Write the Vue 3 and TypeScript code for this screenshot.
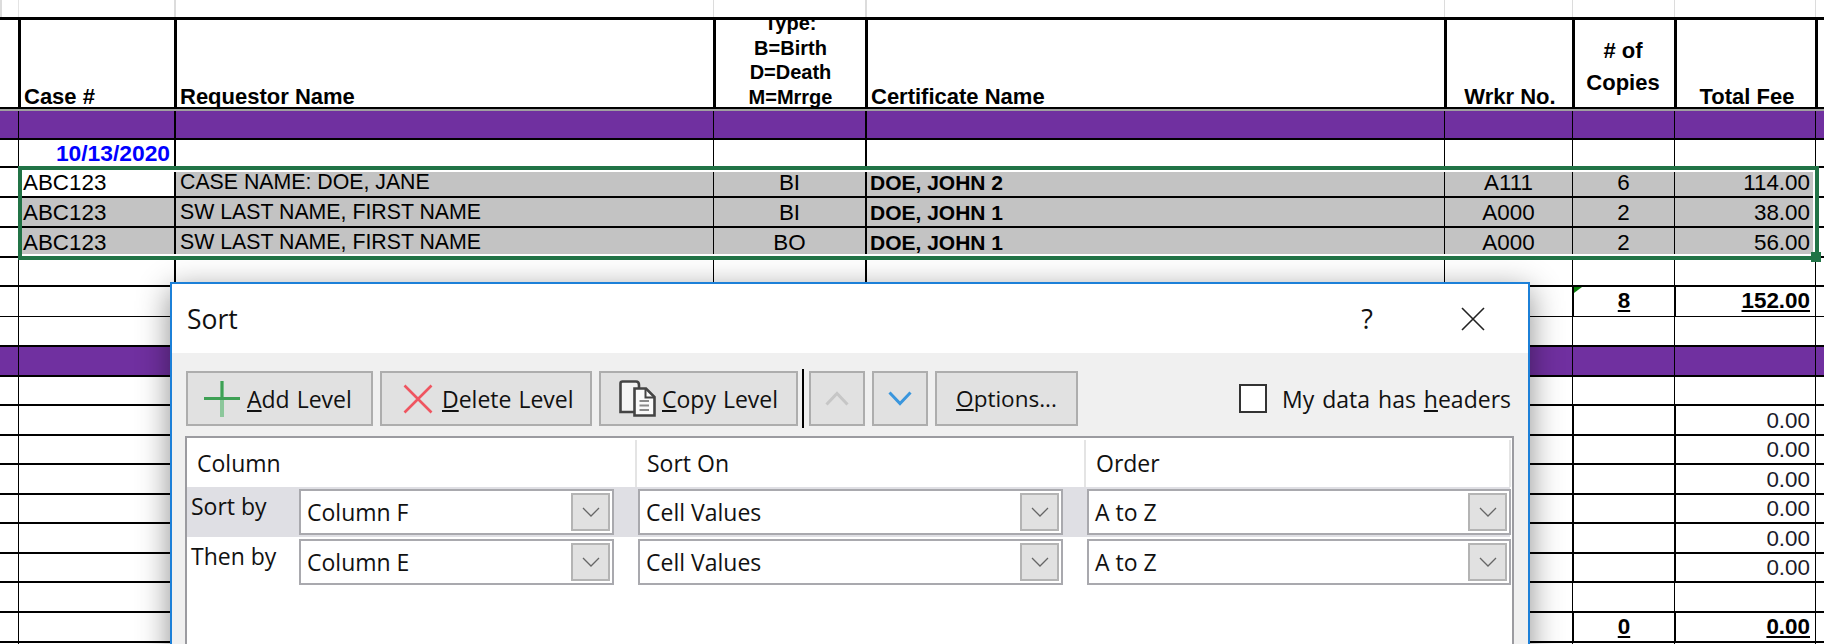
<script setup lang="ts">
interface Row { h: number; cls: string; cells: string[] }
const blank = (h: number, cls = ''): Row => ({ h, cls: 'blank ' + cls, cells: Array(9).fill('') })
const fee = (h: number): Row => ({ h, cls: 'fee', cells: ['', '', '', '', '', '', '', '0.00', ''] })
const rows: Row[] = [
  blank(17, 'top'),
  { h: 92, cls: 'head', cells: ['', 'Case #', 'Requestor Name', 'Type:\nB=Birth\nD=Death\nM=Mrrge', 'Certificate Name', 'Wrkr No.', '# of\nCopies', 'Total Fee', ''] },
  blank(31, 'purple first-purple'),
  { h: 28, cls: 'date', cells: ['', '10/13/2020', '', '', '', '', '', '', ''] },
  { h: 30, cls: 'data first', cells: ['', 'ABC123', 'CASE NAME: DOE, JANE', 'BI', 'DOE, JOHN 2', 'A111', '6', '114.00', ''] },
  { h: 30, cls: 'data', cells: ['', 'ABC123', 'SW LAST NAME, FIRST NAME', 'BI', 'DOE, JOHN 1', 'A000', '2', '38.00', ''] },
  { h: 30, cls: 'data', cells: ['', 'ABC123', 'SW LAST NAME, FIRST NAME', 'BO', 'DOE, JOHN 1', 'A000', '2', '56.00', ''] },
  blank(29),
  { h: 30, cls: 'total thin-line corner', cells: ['', '', '', '', '', '', '8', '152.00', ''] },
  blank(30),
  blank(30, 'purple'),
  blank(29),
  fee(30), fee(29), fee(30), fee(29), fee(30), fee(29),
  blank(30),
  { h: 30, cls: 'total', cells: ['', '', '', '', '', '', '0', '0.00', ''] },
  blank(4),
]

const levels = [
  { label: 'Sort by', col: 'Column F', cls: 'active' },
  { label: 'Then by', col: 'Column E', cls: '' },
]
</script>

<template>
  <div class="page">
    <div class="sheet">
      <div v-for="(r, i) in rows" :key="i" class="row" :class="r.cls" :style="{ height: r.h + 'px' }">
        <div v-for="(t, j) in r.cells" :key="j" class="c" :class="'c' + j">{{ t }}</div>
      </div>
    </div>

    <div class="selection"><span class="handle"></span></div>

    <section class="dialog">
      <header class="title">
        <span class="title-text">Sort</span>
        <span class="help">?</span>
        <svg class="close" width="24" height="24" viewBox="0 0 24 24"><path d="M1 1 23 23M23 1 1 23" stroke="#222" stroke-width="1.600" fill="none" /></svg>
      </header>
      <div class="body">
        <div class="toolbar">
          <button class="btn b-add">
            <svg class="ico-plus" width="36" height="36" viewBox="0 0 36 36"><path d="M18 0V36" stroke="#8cc79b" stroke-width="4" /><path d="M0 17.500H36" stroke="#3ea055" stroke-width="3" /><path d="M18 0V17" stroke="#3ea055" stroke-width="2.500" /></svg>
            <span><u>A</u>dd Level</span>
          </button>
          <button class="btn b-del">
            <svg class="ico-x" width="30" height="30" viewBox="0 0 30 30"><path d="M1.500 1.500 28.500 28.500M28.500 1.500 1.500 28.500" stroke="#ef5560" stroke-width="2.600" fill="none" /></svg>
            <span><u>D</u>elete Level</span>
          </button>
          <button class="btn b-copy">
            <svg class="ico-copy" width="37" height="37" viewBox="0 0 37 37">
              <path d="M1.500 3.500Q1.500 1.500 3.500 1.500H17Q20 1.500 20 5V32H1.500Z" fill="#f4f4f4" stroke="#444" stroke-width="2.600" />
              <path d="M15.500 8.500H27L35.500 17V35.500H15.500Z" fill="#fafafa" stroke="#444" stroke-width="2.600" />
              <path d="M26.500 8.500V17.500H35" fill="none" stroke="#444" stroke-width="2" />
              <path d="M20.500 21H30M20.500 25.500H30M20.500 30H30" stroke="#8a8a8a" stroke-width="2" />
            </svg>
            <span><u>C</u>opy Level</span>
          </button>
          <i class="sep"></i>
          <button class="btn b-arrow">
            <svg width="24" height="15" viewBox="0 0 24 15"><path d="M1.500 13.500 12 2.500 22.500 13.500" fill="none" stroke="#c6c6c6" stroke-width="3" /></svg>
          </button>
          <button class="btn b-arrow">
            <svg width="24" height="15" viewBox="0 0 24 15"><path d="M1.500 1.500 12 12.500 22.500 1.500" fill="none" stroke="#3a96dd" stroke-width="3" /></svg>
          </button>
          <button class="btn b-opt"><span><u>O</u>ptions...</span></button>
          <label class="check"><i class="box"></i><span>My data has <u>h</u>eaders</span></label>
        </div>

        <div class="panel">
          <div class="phead">
            <div class="ph">Column</div>
            <div class="ph">Sort On</div>
            <div class="ph">Order</div>
          </div>
          <div v-for="l in levels" :key="l.label" class="level" :class="l.cls">
            <div class="lab">{{ l.label }}</div>
            <div class="combo k1"><span>{{ l.col }}</span><i class="drop"><svg width="18" height="10" viewBox="0 0 18 10"><path d="M1 1 9 9 17 1" fill="none" stroke="#666" stroke-width="1.300" /></svg></i></div>
            <div class="combo k2"><span>Cell Values</span><i class="drop"><svg width="18" height="10" viewBox="0 0 18 10"><path d="M1 1 9 9 17 1" fill="none" stroke="#666" stroke-width="1.300" /></svg></i></div>
            <div class="combo k3"><span>A to Z</span><i class="drop"><svg width="18" height="10" viewBox="0 0 18 10"><path d="M1 1 9 9 17 1" fill="none" stroke="#666" stroke-width="1.300" /></svg></i></div>
          </div>
        </div>
      </div>
    </section>
  </div>
</template>

<style scoped>
.page { position: relative; width: 1824px; height: 644px; overflow: hidden; background: #fff; font-family: "Liberation Sans", Arial, sans-serif; color: #000; }
.sheet { display: flex; flex-direction: column; }
.row { display: grid; grid-template-columns: 18px 156px 539px 152px 579px 128px 102px 141px 9px; box-sizing: border-box; border-bottom: 2px solid #000; font-size: 22.400px; }
.c { box-sizing: border-box; border-left: 2px solid #000; display: flex; align-items: center; overflow: hidden; white-space: pre-line; position: relative; }
.c0 { border-left: 0; }
.c1 { padding-left: 4px; }
.c2 { padding-left: 4px; font-size: 21.300px; }
.c3, .c5, .c6 { justify-content: center; text-align: center; }
.c4 { padding-left: 3px; font-weight: 700; font-size: 21px; }
.c7 { justify-content: flex-end; padding-right: 5px; }
.row:not(.head):not(.fee):not(.total) .c3,
.row:not(.head):not(.fee):not(.total) .c5,
.row:not(.head):not(.fee):not(.total) .c6,
.row:not(.head):not(.fee):not(.total) .c7,
.row:not(.head) .c1,
.row:not(.head) .c8 { border-left-width: 1px; }

.top { border-bottom: 0; }
.top .c { border-left: 2px solid #dcdcdc; }
.top .c1 { border-left-color: #e4e4e4; }
.head { border-top: 3px solid #000; font-weight: 700; overflow: hidden; }
.head .c { align-items: flex-end; border-left-width: 3px; font-size: 22px; line-height: 24px; margin-bottom: -2px; }
.head .c0 { border-left: 0; }
.head .c1 { padding-left: 3px; }
.head .c2 { padding-left: 3px; }
.head .c3 { font-size: 20px; line-height: 24.500px; }
.head .c6 { line-height: 32px; padding: 0 3px 10px 0; }
.head .c7 { justify-content: center; padding: 0 0 0 2px; }
.head .c5 { padding-left: 1px; }
.purple { background: #7030a0; }
.first-purple { border-top: 2px solid #a0a0a0; }
.date .c1 { justify-content: flex-end; padding: 0 4px 0 0; color: #0000ff; font-weight: 700; font-size: 22.800px; }
.data .c1, .data .c2, .data .c3, .data .c4, .data .c5, .data .c6, .data .c7 { background: #c3c3c3; padding-top: 1px; }
.data.first .c1 { background: #fff; }
.data .c2 { align-items: flex-start; line-height: 28px; padding-top: 0; }
.fee .c7 { padding-top: 1px; color: #1a1a2a; }
.thin-line { border-bottom-width: 1px; }
.total { font-weight: 700; }
.total .c6, .total .c7 { text-decoration: underline; text-decoration-thickness: 2px; text-underline-offset: 2px; padding-bottom: 1px; }
.corner .c6::before { content: ""; position: absolute; left: 0; top: 0; width: 0; height: 0; border-top: 6px solid #0a7d0a; border-right: 8px solid transparent; }

.selection { position: absolute; left: 18px; top: 166px; width: 1801px; height: 94px; box-sizing: border-box; border: 4px solid #217346; }
.selection::after { content: ""; position: absolute; inset: 0; border: 2px solid #fff; border-left: 0; }
.handle { position: absolute; right: -6px; bottom: -6px; width: 10px; height: 10px; background: #217346; z-index: 1; }

.dialog { position: absolute; left: 170px; top: 282px; width: 1360px; height: 400px; box-sizing: border-box; border: 2px solid #1c80d8; border-bottom: 0; background: #f0f0f0; box-shadow: 0 8px 30px rgba(0, 0, 0, .45); font-family: "Open Sans", "Noto Sans", sans-serif; font-size: 23px; color: #111; display: flex; flex-direction: column; }
.title { height: 69px; flex: none; background: #fff; display: flex; align-items: center; padding: 0 43px 0 15px; }
.title-text { font-size: 26.500px; flex: 1; }
.help { font-size: 27px; margin-right: 88px; }
.close { display: block; }
.body { padding: 18px 14px 0 13px; display: flex; flex-direction: column; gap: 10px; }
.toolbar { display: flex; gap: 7px; align-items: center; height: 55px; margin-left: 1px; }
.btn { height: 55px; box-sizing: border-box; border: 2px solid #adadad; background: #e1e1e1; font: inherit; color: inherit; padding: 0; display: flex; align-items: center; justify-content: flex-start; word-spacing: 1px; }
.b-add { width: 187px; padding-left: 16px; gap: 7px; }
.b-del { width: 212px; padding-left: 21px; gap: 9px; }
.b-copy { width: 199px; padding-left: 18px; gap: 6px; }
.sep { display: block; width: 2px; height: 59px; background: #000; margin: 0 -2px 0 -3px; flex: none; }
.b-arrow { width: 56px; justify-content: center; }
.b-opt { width: 143px; justify-content: center; font-size: 22.500px; }
.ico-plus, .ico-x, .ico-copy { flex: none; }
.check { margin-left: auto; display: flex; align-items: center; gap: 15px; padding-right: 3px; word-spacing: 2px; }
.box { display: block; width: 28px; height: 29px; box-sizing: border-box; border: 2px solid #333; background: #fff; }
.panel { border: 2px solid #9b9ba0; background: #fff; height: 260px; box-sizing: border-box; padding-right: 2px; }
.phead { display: grid; grid-template-columns: 450px 449px 425px; height: 49px; padding-top: 2px; box-sizing: border-box; }
.ph { padding: 8px 0 0 10px; line-height: 30px; border-right: 2px solid #e4e4e4; }
.level { height: 50px; display: grid; grid-template-columns: 112px 315px 449px 448px; align-items: center; }
.k2, .k3 { margin-left: 24px; }
.active { background: #dfdfe4; }
.lab { padding: 0 0 12px 4px; line-height: 30px; }
.combo { height: 46px; box-sizing: border-box; border: 2px solid #a9a9ae; background: #fff; display: flex; align-items: center; justify-content: space-between; padding: 0 2px 0 6px; }
.drop { display: flex; align-items: center; justify-content: center; width: 39px; height: 38px; box-sizing: border-box; border: 2px solid #b4b4b4; background: #e1e1e1; }
</style>
